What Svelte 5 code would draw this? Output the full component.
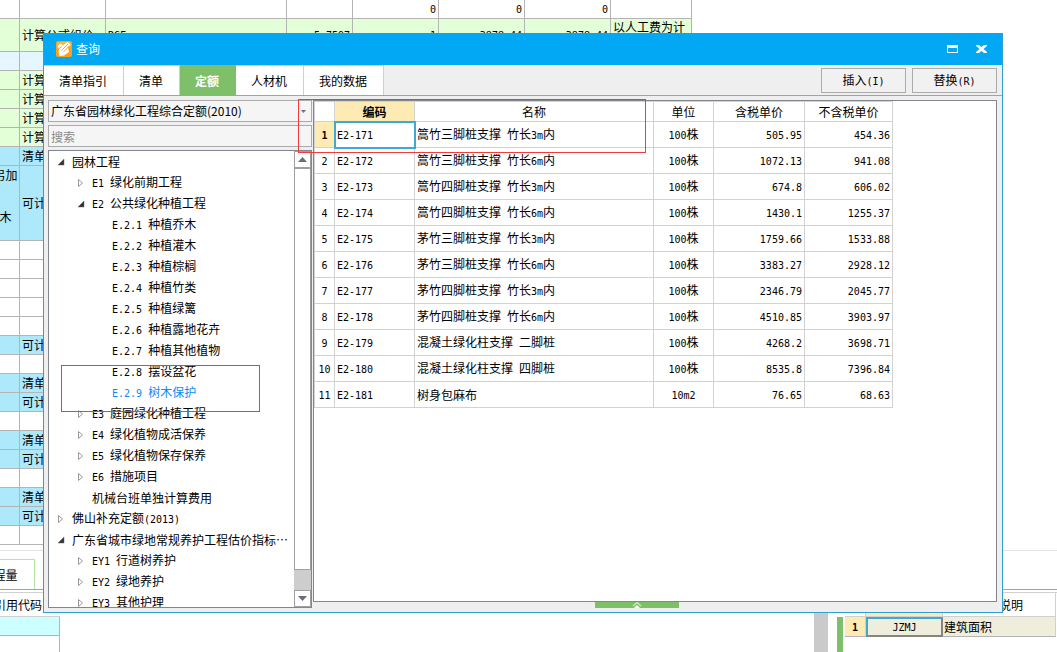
<script>
	// rows of the budget sheet behind the window
	const sheet = [
		{ tone: '', cells: ['', '', '0', '0', '0', ''] },
		{ tone: 'green tall', type: '计算公式组价', cells: ['RGF', '5.7597', '1', '3878.44', '3878.44', '以人工费为计算基数'] },
		{ tone: 'pale' },
		{ tone: 'green', type: '计算公式组价' },
		{ tone: 'green', type: '计算公式组价' },
		{ tone: 'green', type: '计算公式组价' },
		{ tone: 'green', type: '计算公式组价' },
		{ tone: 'blue', type: '清单' },
		{ tone: 'blue high', note: '另加\n\n\n木\n ', type: '可计量清单' },
		{ tone: '' },
		{ tone: '' },
		{ tone: '' },
		{ tone: '' },
		{ tone: '' },
		{ tone: 'blue', type: '可计量清单' },
		{ tone: '' },
		{ tone: 'blue', type: '清单' },
		{ tone: 'blue', type: '可计量清单' },
		{ tone: '' },
		{ tone: 'blue', type: '清单' },
		{ tone: 'blue', type: '可计量清单' },
		{ tone: '' },
		{ tone: 'blue', type: '清单' },
		{ tone: 'blue', type: '可计量清单' },
		{ tone: '' }
	];

	const tabs = ['清单指引', '清单', '定额', '人材机', '我的数据'];
	let activeTab = $state('定额');

	const tree = [
		{ level: 0, state: 'open', name: '园林工程' },
		{ level: 1, state: 'closed', name: 'E1 绿化前期工程' },
		{ level: 1, state: 'open', name: 'E2 公共绿化种植工程' },
		{ level: 2, name: 'E.2.1 种植乔木' },
		{ level: 2, name: 'E.2.2 种植灌木' },
		{ level: 2, name: 'E.2.3 种植棕榈' },
		{ level: 2, name: 'E.2.4 种植竹类' },
		{ level: 2, name: 'E.2.5 种植绿篱' },
		{ level: 2, name: 'E.2.6 种植露地花卉' },
		{ level: 2, name: 'E.2.7 种植其他植物' },
		{ level: 2, name: 'E.2.8 摆设盆花' },
		{ level: 2, name: 'E.2.9 树木保护' },
		{ level: 1, state: 'closed', name: 'E3 庭园绿化种植工程' },
		{ level: 1, state: 'closed', name: 'E4 绿化植物成活保养' },
		{ level: 1, state: 'closed', name: 'E5 绿化植物保存保养' },
		{ level: 1, state: 'closed', name: 'E6 措施项目' },
		{ level: 1, name: '机械台班单独计算费用' },
		{ level: 0, state: 'closed', name: '佛山补充定额(2013)' },
		{ level: 0, state: 'open', name: '广东省城市绿地常规养护工程估价指标…' },
		{ level: 1, state: 'closed', name: 'EY1 行道树养护' },
		{ level: 1, state: 'closed', name: 'EY2 绿地养护' },
		{ level: 1, state: 'closed', name: 'EY3 其他护理' }
	];
	let selected = $state('E.2.9 树木保护');

	const items = [
		['E2-171', '篙竹三脚桩支撑 竹长3m内', '100株', '505.95', '454.36'],
		['E2-172', '篙竹三脚桩支撑 竹长6m内', '100株', '1072.13', '941.08'],
		['E2-173', '篙竹四脚桩支撑 竹长3m内', '100株', '674.8', '606.02'],
		['E2-174', '篙竹四脚桩支撑 竹长6m内', '100株', '1430.1', '1255.37'],
		['E2-175', '茅竹三脚桩支撑 竹长3m内', '100株', '1759.66', '1533.88'],
		['E2-176', '茅竹三脚桩支撑 竹长6m内', '100株', '3383.27', '2928.12'],
		['E2-177', '茅竹四脚桩支撑 竹长3m内', '100株', '2346.79', '2045.77'],
		['E2-178', '茅竹四脚桩支撑 竹长6m内', '100株', '4510.85', '3903.97'],
		['E2-179', '混凝土绿化柱支撑 二脚桩', '100株', '4268.2', '3698.71'],
		['E2-180', '混凝土绿化柱支撑 四脚桩', '100株', '8535.8', '7396.84'],
		['E2-181', '树身包麻布', '10m2', '76.65', '68.63']
	];
	let current = $state(0);

	// latin runs are set at half the width of a chinese character
	function runs(text) {
		return text.match(/[\x20-\x7e]+|[^\x20-\x7e]+/g) ?? [];
	}
</script>

{#snippet mixed(text)}{#each runs(text) as run}{#if run.charCodeAt(0) < 127}<span class="latin">{run}</span>{:else}{run}{/if}{/each}{/snippet}

<div class="desktop">
	<table class="sheet">
		<colgroup>
			<col class="c-note" /><col class="c-num" /><col class="c-code" /><col class="c-rate" />
			<col class="c-num" /><col class="c-num" /><col class="c-num" /><col class="c-memo" />
		</colgroup>
		<tbody>
			{#each sheet as row}
				<tr class={row.tone}>
					<td class="note">{row.note ?? ''}</td>
					<td>{row.type ?? ''}</td>
					{#each row.cells ?? ['', '', '', '', '', ''] as cell, i}
						<td class:right={i > 0 && i < 5} class:memo={i === 5}>{@render mixed(cell)}</td>
					{/each}
				</tr>
			{/each}
		</tbody>
	</table>

	<div class="lower-tabs">
		<button class="lower-tab">工程量</button>
	</div>

	<div class="lower">
		<table class="codes">
			<thead><tr><th>引用代码</th></tr></thead>
			<tbody>
				<tr><td class="cyan"></td></tr>
				<tr><td></td></tr>
			</tbody>
		</table>
		<div class="vbar"></div>
		<div class="marker"></div>
		<table class="vars">
			<colgroup><col class="v-no" /><col class="v-code" /><col /></colgroup>
			<thead><tr><th></th><th class="hot"></th><th>费用说明</th></tr></thead>
			<tbody>
				<tr><td class="hot no">{@render mixed('1')}</td><td class="focus">{@render mixed('JZMJ')}</td><td class="desc">建筑面积</td></tr>
			</tbody>
		</table>
	</div>

	<section class="window">
		<header class="titlebar">
			<svg class="logo" viewBox="0 0 16 16" width="16" height="16">
				<rect width="16" height="16" rx="2" fill="#fba21c" />
				<path d="M1 2.5Q1 1 3 1h10q2 0 2 2v2L8 9 1 7z" fill="#ffb73c" />
				<path d="M1.500 4.500L5 3l2 1.500L11.500 1l3 2.500-2.500 3 1 4.500-5 3.500-4.500.5L2.500 11l.5-3z" fill="#fff" />
				<path d="M5.500 9.500L12 3M7.500 11l5.500-6M3 7.500l3-2" stroke="#f8a93a" stroke-width="1" fill="none" />
			</svg>
			<h1>查询</h1>
			<button class="sys" aria-label="最大化">
				<svg viewBox="0 0 11 8" width="11" height="8"><path d="M0 0h11v8H0zM1 3v4h9V3z" fill="#fff" fill-rule="evenodd" /></svg>
			</button>
			<button class="sys" aria-label="关闭">
				<svg viewBox="0 0 11 8" width="11" height="8"><path d="M0 0h3l2.500 2L8 0h3v1L7.500 4 11 7v1H8L5.500 6 3 8H0V7l3.500-3L0 1z" fill="#fff" /></svg>
			</button>
		</header>

		<nav class="tabs">
			{#each tabs as tab}
				<button class="tab" class:active={tab === activeTab} onclick={() => (activeTab = tab)}>{tab}</button>
			{/each}
			<div class="actions">
				<button class="action">{@render mixed('插入(I)')}</button>
				<button class="action">{@render mixed('替换(R)')}</button>
			</div>
		</nav>

		<div class="content">
			<aside class="side">
				<div class="picker">
					<select aria-label="定额库">
						<option>广东省园林绿化工程综合定额(2010)</option>
					</select>
					<svg viewBox="0 0 5 3" width="5" height="3"><path d="M0 0h5L2.500 3z" fill="#707078" /></svg>
				</div>
				<input class="search" type="text" placeholder="搜索" aria-label="搜索" />
				<div class="tree">
					<ul>
						{#each tree as node}
							<li class="level{node.level}">
								<svg viewBox="0 0 8 8" width="8" height="8">
									{#if node.state === 'open'}
										<path d="M7 1v6H1z" fill="#333" stroke="#666" stroke-width=".5" />
									{:else if node.state === 'closed'}
										<path d="M1.500.5v7L5.500 4z" fill="#fff" stroke="#999" />
									{/if}
								</svg>
								<button class:selected={node.name === selected} onclick={() => (selected = node.name)}>{@render mixed(node.name)}</button>
							</li>
						{/each}
					</ul>
					<div class="scrollbar">
						<button aria-label="向上"><svg viewBox="0 0 9 5" width="9" height="5"><path d="M0 5L4.500 0 9 5z" fill="#6b6b7b" /></svg></button>
						<div class="thumb"></div>
						<button aria-label="向下"><svg viewBox="0 0 9 5" width="9" height="5"><path d="M0 0h9L4.500 5z" fill="#6b6b7b" /></svg></button>
					</div>
				</div>
			</aside>

			<main class="main">
				<div class="panel">
					<table class="quota">
						<colgroup>
							<col class="q-no" /><col class="q-code" /><col class="q-name" />
							<col class="q-unit" /><col class="q-price" /><col class="q-net" />
						</colgroup>
						<thead>
							<tr><th></th><th class="hot">编码</th><th>名称</th><th>单位</th><th>含税单价</th><th>不含税单价</th></tr>
						</thead>
						<tbody>
							{#each items as item, i}
								<tr onclick={() => (current = i)}>
									<td class="no" class:hot={i === current}>{@render mixed(String(i + 1))}</td>
									<td class:focus={i === current}>{@render mixed(item[0])}</td>
									<td>{@render mixed(item[1])}</td>
									<td class="center">{@render mixed(item[2])}</td>
									<td class="right">{@render mixed(item[3])}</td>
									<td class="right">{@render mixed(item[4])}</td>
								</tr>
							{/each}
						</tbody>
					</table>
				</div>
				<button class="handle" aria-label="展开">
					<svg viewBox="0 0 10 6" width="10" height="6"><path d="M1 4l4-3.500L9 4" fill="none" stroke="#c9e8bd" stroke-width="1.500" /><path d="M2 6l3-3 3 3z" fill="#fff" /></svg>
				</button>
			</main>
		</div>
	</section>

	<div class="mark mark-row"></div>
	<div class="mark mark-node"></div>
</div>

<style>
	:global(body) {
		background: #fff;
	}

	.desktop {
		position: relative;
		height: 100vh;
		overflow: hidden;
		font: 12px/16px 'Noto Sans CJK SC', sans-serif;
		color: #000;
	}

	.desktop * {
		box-sizing: border-box;
	}

	button,
	input,
	select {
		font: inherit;
		color: inherit;
		margin: 0;
		padding: 0;
		border: 0;
		border-radius: 0;
		background: none;
	}

	.latin {
		font-family: 'DejaVu Sans Mono', monospace;
		font-size: 10px;
		white-space: pre;
	}

	table {
		table-layout: fixed;
		border-collapse: separate;
		border-spacing: 0;
	}

	td,
	th {
		padding: 0 2px;
		overflow: hidden;
		white-space: nowrap;
		font-weight: normal;
	}

	.right {
		text-align: right;
	}

	.center {
		text-align: center;
	}

	/* sheet, scrolled a little to the right */
	.sheet {
		width: 700px;
		margin-left: -8px;
	}

	.sheet td {
		height: 19px;
		border-right: 1px solid #b4b4b4;
		border-bottom: 1px solid #b4b4b4;
	}

	.sheet .tall td {
		height: 33px;
	}

	.sheet .tall .memo {
		white-space: normal;
	}

	.sheet .high td {
		height: 75px;
	}

	.sheet .note {
		padding: 0 1px;
		text-align: center;
		line-height: 14px;
		white-space: pre;
	}

	.green td {
		background: #e3ffd8;
	}

	.pale td {
		background: #e5f6fe;
	}

	.blue td {
		background: #aee8fb;
	}

	.c-note {
		width: 28px;
	}

	.c-num {
		width: 86px;
	}

	.c-code {
		width: 181px;
	}

	.c-rate {
		width: 66px;
	}

	.c-memo {
		width: 81px;
	}

	.lower-tabs {
		margin-top: 5px;
		padding-top: 8px;
		border-top: 1px solid #e4e4e4;
		border-bottom: 1px solid #7dc069;
	}

	.lower-tab {
		display: block;
		width: 70px;
		height: 30px;
		margin-left: -35px;
		border-top: 1px solid #b5e5a3;
		border-right: 1px solid #b5e5a3;
	}

	.lower {
		display: flex;
		align-items: flex-start;
		height: 80px;
		padding-top: 2px;
	}

	.codes {
		width: 84px;
		margin: 0 auto 0 -24px;
	}

	.codes th,
	.vars th {
		height: 24px;
		border-bottom: 1px solid #d0d0d0;
	}

	.codes th,
	.vars {
		border-top: 1px solid #d0d0d0;
	}

	.codes th {
		height: 25px;
	}

	.codes td {
		height: 19px;
		border-right: 1px solid #b4b4b4;
		border-bottom: 1px solid #b4b4b4;
	}

	.codes tr:last-child td {
		height: 40px;
	}

	.cyan {
		background: #ccffff;
	}

	.vbar {
		width: 14px;
		height: 100%;
		margin-right: 9px;
		background: #cacaca;
	}

	.marker {
		width: 6px;
		height: 60px;
		margin: 25px 2px 0 0;
		background: #7dc069;
	}

	.vars {
		width: 212px;
		padding-right: 1px;
	}

	.vars th,
	.vars td {
		border-right: 1px solid #d0d0d0;
	}

	.vars td {
		height: 19px;
		border-bottom: 1px solid #b4b4b4;
	}

	.v-no {
		width: 21px;
	}

	.v-code {
		width: 77px;
	}

	.vars .desc {
		padding: 0 1px;
		background: #efeedd;
	}

	.vars .focus {
		border: 2px solid #858580;
		border-top-color: #3fa9d1;
		border-left-color: #3fa9d1;
		background: #efeedd;
		text-align: center;
		line-height: 14px;
	}

	.hot {
		background: #feebb4;
		font-weight: bold;
	}

	.no {
		text-align: center;
	}

	/* query window */
	.window {
		position: absolute;
		inset: 33px 54px 39px 43px;
		display: flex;
		flex-direction: column;
		border: 1px solid #2f9fd2;
		border-top: 0;
		background: #efefef;
	}

	.titlebar {
		display: flex;
		align-items: center;
		height: 32px;
		flex: none;
		padding: 0 15px 0 12px;
		background: #02a8f3;
		color: #fff;
	}

	h1 {
		margin: 0 auto 0 4px;
		font-size: 12px;
		font-weight: normal;
	}

	.sys {
		display: flex;
		margin-left: 18px;
	}

	.tabs {
		display: flex;
		flex: none;
		height: 31px;
		border-bottom: 1px solid #7dc069;
	}

	.tab {
		padding: 0 16px 0 15px;
		border-top: 1px solid #b5e5a3;
		border-right: 1px solid #b5e5a3;
		background: #fff;
	}

	.tab.active {
		border-color: #7dc069;
		background: #7dc069;
		color: #fff;
		font-weight: bold;
	}

	.actions {
		display: flex;
		gap: 6px;
		margin-left: auto;
		padding: 3px 5px 2px 0;
	}

	.action {
		width: 85px;
		border: 1px solid #ababab;
		background: #f1f1f1;
	}

	.content {
		display: flex;
		flex: 1;
		min-height: 0;
		gap: 1px;
		padding: 4px 5px 4px 4px;
	}

	.side {
		display: flex;
		flex-direction: column;
		flex: none;
		gap: 3px;
		width: 264px;
	}

	.picker {
		position: relative;
		height: 22px;
	}

	select,
	.search {
		display: block;
		width: 100%;
		height: 22px;
		padding: 0 2px;
		border: 1px solid #ababab;
		background: #f5f5f5;
		appearance: none;
	}

	.search::placeholder {
		color: #8a8a8a;
	}

	.picker svg {
		position: absolute;
		top: 10px;
		right: 6px;
	}

	.tree {
		display: flex;
		flex: 1;
		min-height: 0;
		border: 1px solid #82868f;
		background: #fff;
	}

	ul {
		flex: 1;
		min-width: 0;
		margin: 0;
		padding: 0;
		overflow: hidden;
		list-style: none;
	}

	li {
		display: flex;
		align-items: center;
		gap: 7px;
		height: 21px;
		padding-left: 8px;
		white-space: nowrap;
	}

	li svg {
		flex: none;
	}

	.level1 {
		padding-left: 28px;
	}

	.level2 {
		padding-left: 48px;
	}

	.selected {
		color: #0a8bf5;
	}

	.scrollbar {
		display: flex;
		flex-direction: column;
		width: 17px;
		background: #cdcdcd;
	}

	.scrollbar button {
		display: flex;
		align-items: center;
		justify-content: center;
		height: 17px;
		border: 1px solid #a0a0a0;
		background: #fff;
	}

	.thumb {
		flex: 1;
		margin-bottom: 20px;
		border: 1px solid #a0a0a0;
		background: #fff;
	}

	.main {
		display: flex;
		flex-direction: column;
		flex: 1;
		min-width: 0;
	}

	.panel {
		flex: 1;
		min-height: 0;
		overflow: hidden;
		border: 1px solid #82868f;
		background: #fff;
	}

	.quota {
		width: 579px;
		border-top: 1px solid #d2d2d2;
		border-left: 1px solid #d2d2d2;
	}

	.quota th,
	.quota td {
		height: 26px;
		border-right: 1px solid #d2d2d2;
		border-bottom: 1px solid #d2d2d2;
	}

	.quota th {
		height: 20px;
	}

	.quota .focus {
		outline: 2px solid #3fa9d1;
		outline-offset: -1px;
	}

	.quota .no {
		padding: 0;
	}

	.q-no {
		width: 20px;
	}

	.q-code {
		width: 80px;
	}

	.q-name {
		width: 239px;
	}

	.q-unit {
		width: 60px;
	}

	.q-price {
		width: 91px;
	}

	.q-net {
		width: 88px;
	}

	.handle {
		display: flex;
		justify-content: center;
		width: 84px;
		height: 6px;
		margin-left: 282px;
		background: #7dc069;
	}

	/* red frames drawn over the window */
	.mark {
		position: absolute;
		border: 1px solid #f43b3b;
		pointer-events: none;
	}

	.mark-row {
		top: 99px;
		left: 298px;
		width: 348px;
		height: 54px;
	}

	.mark-node {
		top: 365px;
		left: 61px;
		width: 199px;
		height: 47px;
	}
</style>
